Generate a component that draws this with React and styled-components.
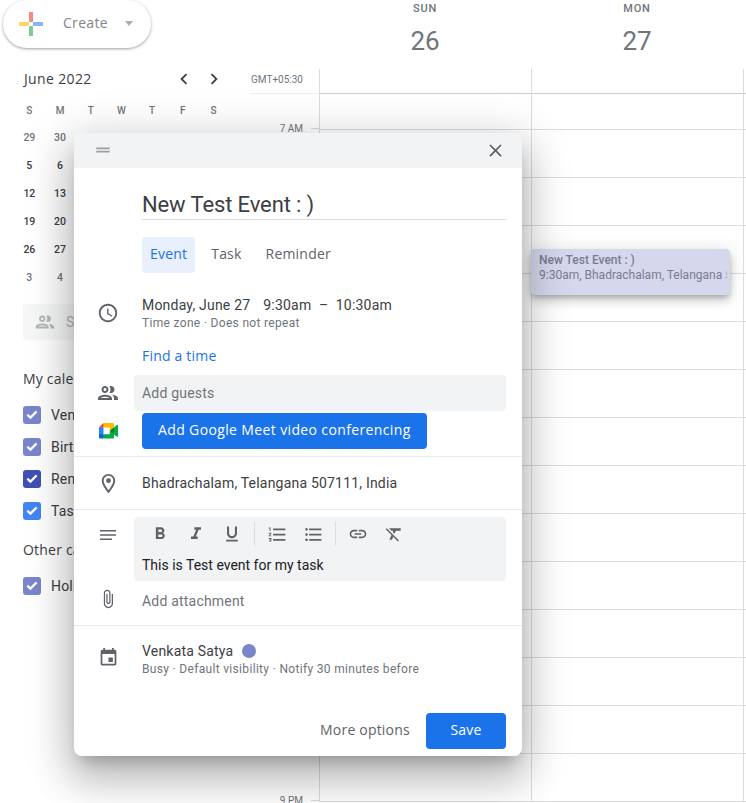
import React from 'react'
import styled, { createGlobalStyle } from 'styled-components'

const GlobalStyle = createGlobalStyle`
  html, body {
    margin: 0;
    padding: 0;
    background: #fff;
    font-family: Roboto, "Liberation Sans", sans-serif;
    color: #3c4043;
  }
`

// stands in for Google Sans
const sans = `"Open Sans", Roboto, sans-serif`

const paths = {
  close: 'M19 6.41L17.59 5 12 10.59 6.41 5 5 6.41 10.59 12 5 17.59 6.41 19 12 13.41 17.59 19 19 17.59 13.41 12z',
  clock: 'M11.99 2C6.47 2 2 6.48 2 12s4.47 10 9.99 10C17.52 22 22 17.52 22 12S17.52 2 11.99 2zM12 20c-4.42 0-8-3.58-8-8s3.58-8 8-8 8 3.58 8 8-3.58 8-8 8zm.5-13H11v6l5.25 3.15.75-1.23-4.5-2.67z',
  people: 'M9 13.75c-2.34 0-7 1.17-7 3.5V19h14v-1.75c0-2.33-4.66-3.5-7-3.5zM4.34 17c.84-.58 2.87-1.25 4.66-1.25s3.82.67 4.66 1.25H4.34zM9 12c1.93 0 3.5-1.57 3.5-3.5S10.93 5 9 5 5.5 6.57 5.5 8.5 7.07 12 9 12zm0-5c.83 0 1.5.67 1.5 1.5S9.83 10 9 10s-1.5-.67-1.5-1.5S8.17 7 9 7zm7.04 6.81c1.16.84 1.96 1.96 1.96 3.44V19h4v-1.75c0-2.02-3.5-3.17-5.96-3.44zM15 12c1.93 0 3.5-1.57 3.5-3.5S16.93 5 15 5c-.54 0-1.04.13-1.5.35.63.89 1 1.98 1 3.15s-.37 2.26-1 3.15c.46.22.96.35 1.5.35z',
  place: 'M12 2C8.13 2 5 5.13 5 9c0 5.25 7 13 7 13s7-7.75 7-13c0-3.87-3.13-7-7-7zM7 9c0-2.76 2.24-5 5-5s5 2.24 5 5c0 2.88-2.88 7.19-5 9.88C9.92 16.21 7 11.85 7 9zm5-2.5a2.5 2.5 0 1 0 0 5 2.5 2.5 0 0 0 0-5z',
  subject: 'M4 7h16v1.6H4zM4 11.2h16v1.6H4zM4 15.4h12v1.6H4z',
  attach: 'M16.5 6v11.5c0 2.21-1.79 4-4 4s-4-1.79-4-4V5c0-1.38 1.12-2.5 2.5-2.5s2.5 1.12 2.5 2.5v10.5c0 .55-.45 1-1 1s-1-.45-1-1V6H10v9.5c0 1.38 1.12 2.5 2.5 2.5s2.5-1.12 2.5-2.5V5c0-2.21-1.79-4-4-4S7 2.79 7 5v12.5c0 3.04 2.46 5.5 5.5 5.5s5.5-2.46 5.5-5.5V6h-1.5z',
  event: 'M17 12h-5v5h5v-5zM16 1v2H8V1H6v2H5c-1.11 0-1.99.9-1.99 2L3 19c0 1.1.89 2 2 2h14c1.1 0 2-.9 2-2V5c0-1.1-.9-2-2-2h-1V1h-2zm3 18H5V8h14v11z',
  drag: 'M20 9H4v2h16V9zM4 15h16v-2H4v2z',
  prev: 'M15.41 7.41L14 6l-6 6 6 6 1.41-1.41L10.83 12z',
  next: 'M10 6L8.59 7.41 13.17 12l-4.58 4.59L10 18l6-6z',
  bold: 'M15.6 10.79c.97-.67 1.65-1.77 1.65-2.79 0-2.26-1.75-4-4-4H7v14h7.04c2.09 0 3.71-1.7 3.71-3.79 0-1.52-.86-2.82-2.15-3.42zM10 6.5h3c.83 0 1.5.67 1.5 1.5s-.67 1.5-1.5 1.5h-3v-3zm3.5 9H10v-3h3.5c.83 0 1.5.67 1.5 1.5s-.67 1.5-1.5 1.5z',
  italic: 'M10 4v3h2.21l-3.42 8H6v3h8v-3h-2.21l3.42-8H18V4z',
  underline: 'M12 17c3.31 0 6-2.69 6-6V3h-2.5v8c0 1.93-1.57 3.5-3.5 3.5S8.5 12.93 8.5 11V3H6v8c0 3.31 2.69 6 6 6zm-7 2v2h14v-2H5z',
  numbered: 'M2 17h2v.5H3v1h1v.5H2v1h3v-4H2v1zm1-9h1V4H2v1h1v3zm-1 3h1.8L2 13.1v.9h3v-1H3.2L5 10.9V10H2v1zm5-6v2h14V5H7zm0 14h14v-2H7v2zm0-6h14v-2H7v2z',
  bulleted: 'M4 10.5c-.83 0-1.5.67-1.5 1.5s.67 1.5 1.5 1.5 1.5-.67 1.5-1.5-.67-1.5-1.5-1.5zm0-6c-.83 0-1.5.67-1.5 1.5S3.17 7.5 4 7.5 5.5 6.83 5.5 6 4.83 4.5 4 4.5zm0 12c-.83 0-1.5.68-1.5 1.5s.68 1.5 1.5 1.5 1.5-.68 1.5-1.5-.67-1.5-1.5-1.5zM7 19h14v-2H7v2zm0-6h14v-2H7v2zm0-8v2h14V5H7z',
  link: 'M3.9 12c0-1.71 1.39-3.1 3.1-3.1h4V7H7c-2.76 0-5 2.24-5 5s2.24 5 5 5h4v-1.9H7c-1.71 0-3.1-1.39-3.1-3.1zM8 13h8v-2H8v2zm9-6h-4v1.9h4c1.71 0 3.1 1.39 3.1 3.1s-1.39 3.1-3.1 3.1h-4V17h4c2.76 0 5-2.24 5-5s-2.24-5-5-5z',
  clear: 'M3.27 5L2 6.27l6.97 6.97L6.5 19h3l1.57-3.66L16.73 21 18 19.73 3.55 5.27 3.27 5zM6 5v.18L8.82 8h2.4l-.72 1.68 2.1 2.1L14.21 8H20V5H6z',
  check: 'M9.6 18.4L3.8 12.6l2.4-2.4 3.4 3.4 8.2-8.2 2.4 2.4z',
}

const Svg = styled.svg`
  display: block;
  flex: none;
  fill: ${(p) => p.$color || '#5f6368'};
`

const Icon = ({ name, size = 24, color }) => (
  <Svg viewBox="0 0 24 24" width={size} height={size} $color={color}>
    <path d={paths[name]} />
  </Svg>
)

const PlusIcon = () => (
  <svg viewBox="0 0 24 24" width="24" height="24">
    <path fill="#f28b82" d="M10 0h4v10h-4z" />
    <path fill="#8ab4f8" d="M14 10h10v4H14z" />
    <path fill="#81c995" d="M10 14h4v10h-4z" />
    <path fill="#fdd663" d="M0 10h10v4H0z" />
  </svg>
)

const MeetIcon = () => (
  <svg viewBox="0 0 87.5 72" width="19" height="15.6">
    <path fill="#00832d" d="M49.5 36l8.53 9.75 11.47 7.33 2-17.02-2-16.64-11.69 6.44z" />
    <path fill="#0066da" d="M0 51.5V66c0 3.315 2.685 6 6 6h14.5l3-10.96-3-9.54-9.95-3z" />
    <path fill="#e94235" d="M20.5 0L0 20.5l10.55 3 9.95-3 2.95-9.41z" />
    <path fill="#2684fc" d="M20.5 20.5H0v31h20.5z" />
    <path fill="#00ac47" d="M82.6 8.68L69.5 19.42v33.66l13.16 10.79c1.97 1.54 4.85.135 4.85-2.37V11c0-2.535-2.945-3.925-4.91-2.32zM49.5 36v15.5h-29V72h43c3.315 0 6-2.685 6-6V53.08z" />
    <path fill="#ffba00" d="M63.5 0h-43v20.5h29V36l20-16.57V6c0-3.315-2.685-6-6-6z" />
  </svg>
)

const Page = styled.div`
  position: relative;
  display: flex;
  width: 746px;
  height: 803px;
  overflow: hidden;
  background: #fff;
`

/* left sidebar */
const Sidebar = styled.aside`
  flex: none;
  width: 256px;
`

const CreateButton = styled.div`
  display: flex;
  align-items: center;
  width: 148px;
  height: 48px;
  margin-left: 3px;
  padding-left: 16px;
  box-sizing: border-box;
  border-radius: 24px;
  background: #fff;
  box-shadow: 0 1px 2px 0 rgba(60, 64, 67, 0.3), 0 1px 3px 1px rgba(60, 64, 67, 0.15);
`

const CreateLabel = styled.span`
  margin: 0 0 3px 20px;
  font-family: ${sans};
  font-size: 14px;
  font-weight: 500;
  letter-spacing: 0.3px;
  color: #80868b;
`

const Caret = styled.span`
  margin: 0 0 2px 17px;
  border-left: 4.5px solid transparent;
  border-right: 4.5px solid transparent;
  border-top: 5px solid #aaaeb2;
`

const MonthRow = styled.div`
  display: flex;
  align-items: center;
  height: 24px;
  margin-top: 19px;
  padding-left: 24px;
`

const MonthName = styled.span`
  width: 145px;
  margin-top: -2px;
  font-family: ${sans};
  font-size: 14px;
  font-weight: 500;
  letter-spacing: 0.35px;
  color: #3c4043;
`

const Chevron = styled.span`
  display: flex;
  justify-content: center;
  width: 30px;
`

const MiniGrid = styled.div`
  display: grid;
  grid-template-columns: repeat(7, 30.7px);
  grid-auto-rows: 28px;
  margin-left: 14px;
  margin-top: 5px;
`

const WeekDay = styled.span`
  display: flex;
  align-items: center;
  justify-content: center;
  height: 28px;
  font-size: 10px;
  font-weight: 500;
  color: #70757a;
`

const MiniDay = styled.span`
  display: flex;
  align-items: center;
  justify-content: center;
  margin-top: -2px;
  font-size: 10.5px;
  font-weight: 500;
  color: ${(p) => (p.$muted ? '#70757a' : '#3c4043')};
`

const PeopleSearch = styled.div`
  display: flex;
  align-items: center;
  gap: 10px;
  width: 212px;
  height: 36px;
  margin: 12px 0 0 23px;
  padding-left: 11px;
  box-sizing: border-box;
  border-radius: 4px;
  background: #f6f7f7;
  font-size: 14px;
  color: #b4b7ba;
`

const SectionTitle = styled.div`
  margin-left: 23px;
  margin-top: ${(p) => p.$top}px;
  margin-bottom: ${(p) => p.$bottom}px;
  font-family: ${sans};
  font-size: 14px;
  font-weight: 500;
  letter-spacing: 0.2px;
  line-height: 20px;
  color: #3c4043;
`

const CalendarRow = styled.div`
  display: flex;
  align-items: center;
  gap: 10px;
  height: 32px;
  margin-left: 23px;
  font-size: 14px;
  letter-spacing: 0.2px;
  color: #3c4043;
`

const CheckBox = styled.span`
  display: flex;
  align-items: center;
  justify-content: center;
  width: 18px;
  height: 18px;
  border-radius: 3px;
  background: ${(p) => p.$color};
`

/* time grid */
const Main = styled.main`
  flex: 1;
  min-width: 0;
`

const HeadRow = styled.div`
  display: flex;
  height: 68px;
  padding: 1px 0 0 63px;
`

const DayHead = styled.div`
  display: flex;
  flex-direction: column;
  align-items: center;
  width: 212px;
  color: #70757a;
`

const DayName = styled.span`
  font-size: 11px;
  font-weight: 500;
  letter-spacing: 0.8px;
  line-height: 16px;
`

const DayNumber = styled.span`
  margin-top: 6px;
  font-size: 26px;
  line-height: 36px;
`

const GridRow = styled.div`
  display: flex;
`

const Gutter = styled.div`
  flex: none;
  width: 63px;
`

const GutterTop = styled.div`
  display: flex;
  justify-content: flex-end;
  height: 24px;
  margin-left: -6px;
  padding-right: 16px;
  border-bottom: 1px solid #eceef0;
  font-size: 10px;
  line-height: 22px;
  white-space: nowrap;
  color: #70757a;
`

const GutterCell = styled.div`
  display: flex;
  align-items: flex-end;
  justify-content: flex-end;
  height: ${(p) => p.$height}px;
  &::after {
    content: '';
    width: 8px;
    height: 1px;
    margin-bottom: 1px;
    background: #dadce0;
  }
`

const HourLabel = styled.span`
  margin: 0 8px -5px 0;
  font-size: 10px;
  line-height: 12px;
  color: #70757a;
`

const DayColumn = styled.div`
  position: relative;
  flex: none;
  width: ${(p) => p.$width}px;
  box-sizing: border-box;
  border-left: 1px solid #dadce0;
`

const Slot = styled.div`
  height: ${(p) => p.$height}px;
  box-sizing: border-box;
  border-bottom: 1px solid ${(p) => (p.$strong ? '#c9cbce' : '#dadce0')};
`

const EventChip = styled.div`
  position: absolute;
  left: -1px;
  top: 180px;
  width: 199px;
  height: 46px;
  padding: 4px 3px 0 8px;
  box-sizing: border-box;
  overflow: hidden;
  white-space: nowrap;
  border-radius: 4px;
  background: #d5d8ec;
  box-shadow: 0 6px 10px 0 rgba(0, 0, 0, 0.14), 0 1px 18px 0 rgba(0, 0, 0, 0.12), 0 3px 5px -1px rgba(0, 0, 0, 0.2);
  font-size: 12px;
  line-height: 15px;
  color: #797b94;
`

const EventChipTitle = styled.div`
  font-weight: 500;
`

const EventChipText = styled.div`
  overflow: hidden;
`

/* dialog */
const Dialog = styled.section`
  position: absolute;
  left: 74px;
  top: 133px;
  width: 448px;
  height: 623px;
  border-radius: 8px;
  background: #fff;
  overflow: hidden;
  box-shadow: 0 24px 38px 3px rgba(0, 0, 0, 0.17), 0 9px 46px 8px rgba(0, 0, 0, 0.15), 0 11px 15px -7px rgba(0, 0, 0, 0.22);
`

const DialogBar = styled.header`
  display: flex;
  align-items: center;
  justify-content: space-between;
  height: 34px;
  padding: 0 16px 1px 19px;
  background: #f1f3f4;
`

const TitleInput = styled.div`
  height: 33px;
  margin: 18px 16px 0 68px;
  border-bottom: 1px solid #dadce0;
  font-size: 22px;
  letter-spacing: -0.12px;
  line-height: 37px;
  color: #3c4043;
`

const Tabs = styled.div`
  display: flex;
  gap: 8px;
  margin: 17px 0 0 68px;
`

const Tab = styled.span`
  height: 36px;
  padding: 0 8px;
  border-radius: 4px;
  background: ${(p) => (p.$active ? '#e8f0fe' : 'transparent')};
  font-family: ${sans};
  font-size: 14px;
  font-weight: 500;
  letter-spacing: 0.2px;
  line-height: 34px;
  color: ${(p) => (p.$active ? '#1a73e8' : '#5f6368')};
`

const Row = styled.div`
  display: grid;
  grid-template-columns: 68px 1fr;
  align-items: center;
  min-height: ${(p) => p.$height || 0}px;
  margin-top: ${(p) => p.$top || 0}px;
  padding-right: 16px;
`

const IconCell = styled.div`
  display: flex;
  justify-content: center;
  margin-bottom: ${(p) => p.$raise || 0}px;
`

const EditorIconCell = styled(IconCell)`
  align-self: start;
  margin-top: 6px;
`

const Line = styled.div`
  font-size: 14px;
  letter-spacing: 0.2px;
  line-height: 20px;
  color: ${(p) => p.$color || '#3c4043'};
`

const TimeLine = styled(Line)`
  display: flex;
`

const TimePart = styled.span`
  margin-right: ${(p) => p.$gap}px;
`

const SubLine = styled.div`
  font-size: 12px;
  line-height: 16px;
  letter-spacing: 0.32px;
  color: #70757a;
`

const Link = styled.div`
  font-family: ${sans};
  font-size: 14px;
  font-weight: 500;
  letter-spacing: 0.2px;
  line-height: 20px;
  color: #1a73e8;
`

const GuestField = styled.div`
  height: 36px;
  margin-left: -8px;
  padding-left: 8px;
  border-radius: 4px;
  background: #f1f3f4;
  font-size: 14px;
  letter-spacing: 0.2px;
  line-height: 36px;
  color: #70757a;
`

const PrimaryButton = styled.span`
  display: inline-block;
  height: 36px;
  border-radius: 4px;
  padding: 0 ${(p) => p.$pad}px;
  background: #1a73e8;
  font-family: ${sans};
  font-size: 14px;
  font-weight: 500;
  letter-spacing: ${(p) => p.$spacing}px;
  line-height: 34px;
  color: #fff;
`

const Divider = styled.div`
  height: 1px;
  margin-top: ${(p) => p.$top || 0}px;
  background: #e8eaed;
`

const Editor = styled.div`
  height: 64px;
  margin-left: -8px;
  box-sizing: border-box;
  border-radius: 4px;
  background: #f1f3f4;
`

const Toolbar = styled.div`
  display: flex;
  align-items: center;
  height: 34px;
  padding-left: 8px;
`

const Tool = styled.span`
  display: flex;
  align-items: center;
  justify-content: center;
  width: 36px;
`

const ToolSeparator = styled.span`
  width: 1px;
  height: 24px;
  margin: 0 4px;
  background: #dadce0;
`

const EditorText = styled.div`
  padding: 4px 0 0 8px;
  font-size: 14px;
  line-height: 20px;
  color: #202124;
`

const NameLine = styled(Line)`
  display: flex;
  align-items: center;
  gap: 9px;
`

const ColorDot = styled.span`
  width: 14px;
  height: 14px;
  border-radius: 50%;
  background: #7986cb;
`

const Footer = styled.footer`
  display: flex;
  align-items: center;
  justify-content: flex-end;
  gap: 16px;
  margin-top: 36px;
  padding-right: 16px;
`

const TextButton = styled.span`
  margin-bottom: 3px;
  font-family: ${sans};
  font-size: 14px;
  font-weight: 500;
  letter-spacing: 0.2px;
  color: #5f6368;
`

const weekDays = ['S', 'M', 'T', 'W', 'T', 'F', 'S']

const miniWeeks = [
  [29, 30, 31, 1, 2, 3, 4],
  [5, 6, 7, 8, 9, 10, 11],
  [12, 13, 14, 15, 16, 17, 18],
  [19, 20, 21, 22, 23, 24, 25],
  [26, 27, 28, 29, 30, 1, 2],
  [3, 4, 5, 6, 7, 8, 9],
]

const calendars = [
  { name: 'Venkata Satya', color: '#7986cb' },
  { name: 'Birthdays', color: '#7986cb' },
  { name: 'Reminders', color: '#3f51b5' },
  { name: 'Tasks', color: '#4285f4' },
]

// the view is scrolled, so the first slot above 7 AM is only partly shown
const hours = ['7 AM', '8 AM', '9 AM', '10 AM', '11 AM', '12 PM', '1 PM', '2 PM', '3 PM', '4 PM', '5 PM', '6 PM', '7 PM', '8 PM', '9 PM']

function MiniCalendar() {
  return (
    <MiniGrid>
      {weekDays.map((d, i) => (
        <WeekDay key={i}>{d}</WeekDay>
      ))}
      {miniWeeks.map((week, w) =>
        week.map((day, d) => {
          const muted = (w === 0 && day > 20) || (w === 4 && day < 10) || w === 5
          return (
            <MiniDay key={`${w}-${d}`} $muted={muted}>
              {day}
            </MiniDay>
          )
        })
      )}
    </MiniGrid>
  )
}

function CalendarItem({ name, color }) {
  return (
    <CalendarRow>
      <CheckBox $color={color}>
        <Icon name="check" size={16} color="#fff" />
      </CheckBox>
      {name}
    </CalendarRow>
  )
}

function DaySlots() {
  return (
    <>
      <Slot $height={25} $strong />
      {hours.map((h, i) => (
        <Slot key={h} $height={i === 0 ? 36 : 48} />
      ))}
    </>
  )
}

function EventDialog() {
  return (
    <Dialog>
      <DialogBar>
        <Icon name="drag" size={20} color="#9aa0a6" />
        <Icon name="close" size={21} />
      </DialogBar>

      <TitleInput>New Test Event : )</TitleInput>

      <Tabs>
        <Tab $active>Event</Tab>
        <Tab>Task</Tab>
        <Tab>Reminder</Tab>
      </Tabs>

      <Row $top={22}>
        <IconCell><Icon name="clock" size={22} /></IconCell>
        <div>
          <TimeLine>
            <TimePart $gap={13}>Monday, June 27</TimePart>
            <TimePart $gap={7.5}>9:30am</TimePart>
            <TimePart $gap={7.5}>–</TimePart>
            <span>10:30am</span>
          </TimeLine>
          <SubLine>Time zone · Does not repeat</SubLine>
        </div>
      </Row>

      <Row $top={15}>
        <span />
        <Link>Find a time</Link>
      </Row>

      <Row $top={9}>
        <IconCell><Icon name="people" size={24} /></IconCell>
        <GuestField>Add guests</GuestField>
      </Row>

      <Row $top={2}>
        <IconCell><MeetIcon /></IconCell>
        <div>
          <PrimaryButton $pad={16} $spacing={0.37}>Add Google Meet video conferencing</PrimaryButton>
        </div>
      </Row>

      <Divider $top={7} />

      <Row $height={52}>
        <IconCell><Icon name="place" size={23} /></IconCell>
        <Line>Bhadrachalam, Telangana 507111, India</Line>
      </Row>

      <Divider />

      <Row $top={7}>
        <EditorIconCell><Icon name="subject" size={24} /></EditorIconCell>
        <Editor>
          <Toolbar>
            <Tool><Icon name="bold" size={20} /></Tool>
            <Tool><Icon name="italic" size={20} /></Tool>
            <Tool><Icon name="underline" size={20} /></Tool>
            <ToolSeparator />
            <Tool><Icon name="numbered" size={21} /></Tool>
            <Tool><Icon name="bulleted" size={21} /></Tool>
            <ToolSeparator />
            <Tool><Icon name="link" size={20} /></Tool>
            <Tool><Icon name="clear" size={20} /></Tool>
          </Toolbar>
          <EditorText>This is Test event for my task</EditorText>
        </Editor>
      </Row>

      <Row $top={2} $height={36}>
        <IconCell $raise={4}><Icon name="attach" size={20} /></IconCell>
        <Line $color="#70757a">Add attachment</Line>
      </Row>

      <Divider $top={6} />

      <Row $top={15}>
        <IconCell $raise={3}><Icon name="event" size={21} /></IconCell>
        <div>
          <NameLine>
            Venkata Satya
            <ColorDot />
          </NameLine>
          <SubLine>Busy · Default visibility · Notify 30 minutes before</SubLine>
        </div>
      </Row>

      <Footer>
        <TextButton>More options</TextButton>
        <PrimaryButton $pad={24.5} $spacing={0.2}>Save</PrimaryButton>
      </Footer>
    </Dialog>
  )
}

export default function App() {
  return (
    <>
      <GlobalStyle />
      <Page>
        <Sidebar>
          <CreateButton>
            <PlusIcon />
            <CreateLabel>Create</CreateLabel>
            <Caret />
          </CreateButton>

          <MonthRow>
            <MonthName>June 2022</MonthName>
            <Chevron><Icon name="prev" size={22} color="#3c4043" /></Chevron>
            <Chevron><Icon name="next" size={22} color="#3c4043" /></Chevron>
          </MonthRow>

          <MiniCalendar />

          <PeopleSearch>
            <Icon name="people" size={22} color="#b4b7ba" />
            Search for people
          </PeopleSearch>

          <SectionTitle $top={29} $bottom={10}>My calendars</SectionTitle>
          {calendars.map((c) => (
            <CalendarItem key={c.name} {...c} />
          ))}

          <SectionTitle $top={13} $bottom={10}>Other calendars</SectionTitle>
          <CalendarItem name="Holidays in India" color="#7986cb" />
        </Sidebar>

        <Main>
          <HeadRow>
            <DayHead>
              <DayName>SUN</DayName>
              <DayNumber>26</DayNumber>
            </DayHead>
            <DayHead>
              <DayName>MON</DayName>
              <DayNumber>27</DayNumber>
            </DayHead>
          </HeadRow>

          <GridRow>
            <Gutter>
              <GutterTop>GMT+05:30</GutterTop>
              {hours.map((h, i) => (
                <GutterCell key={h} $height={i === 0 ? 36 : 48}>
                  <HourLabel>{h}</HourLabel>
                </GutterCell>
              ))}
            </Gutter>
            <DayColumn $width={212}>
              <DaySlots />
            </DayColumn>
            <DayColumn $width={212}>
              <DaySlots />
              <EventChip>
                <EventChipTitle>New Test Event : )</EventChipTitle>
                <EventChipText>9:30am, Bhadrachalam, Telangana 507111, India</EventChipText>
              </EventChip>
            </DayColumn>
            <DayColumn $width={3}>
              <DaySlots />
            </DayColumn>
          </GridRow>
        </Main>

        <EventDialog />
      </Page>
    </>
  )
}
